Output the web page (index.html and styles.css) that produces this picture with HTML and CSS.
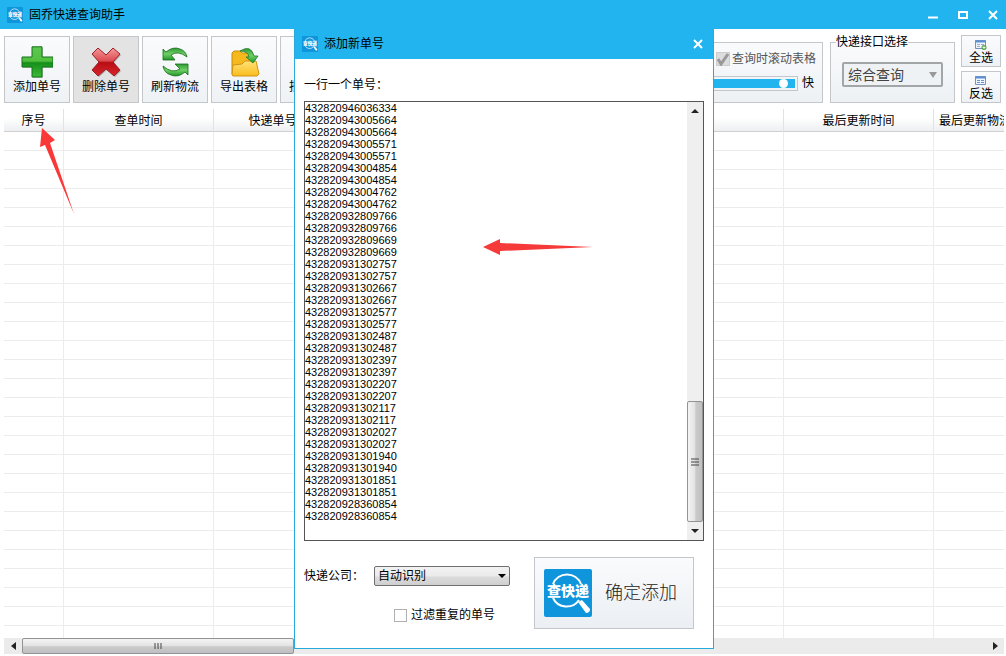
FILE: index.html
```html
<!DOCTYPE html>
<html lang="zh-CN">
<head>
<meta charset="utf-8">
<title>固乔快递查询助手</title>
<link rel="stylesheet" href="styles.css">
</head>
<body>
<svg class="defs" aria-hidden="true">
  <defs>
    <linearGradient id="green" x1="0" y1="0" x2="0" y2="1"><stop offset="0" stop-color="#5cc850"/><stop offset=".47" stop-color="#52c03e"/><stop offset=".53" stop-color="#158f1b"/><stop offset="1" stop-color="#3cba34"/></linearGradient>
    <linearGradient id="leaf" x1="0" y1="0" x2="0" y2="1"><stop offset="0" stop-color="#2f9a33"/><stop offset=".5" stop-color="#6fd067"/><stop offset="1" stop-color="#1f9427"/></linearGradient>
    <linearGradient id="red" x1="0" y1="0" x2="0" y2="1"><stop offset="0" stop-color="#f59a9d"/><stop offset=".46" stop-color="#dd4a50"/><stop offset=".52" stop-color="#b80d14"/><stop offset="1" stop-color="#d9262c"/></linearGradient>
    <linearGradient id="gold" x1="0" y1="0" x2="0" y2="1"><stop offset="0" stop-color="#ffe27a"/><stop offset="1" stop-color="#f9bd1c"/></linearGradient>
    <symbol id="logo" viewBox="0 0 48 48">
      <rect width="48" height="48" rx="2" fill="#0f95dc"/>
      <path d="M9 15A15 15 0 0 1 37 15M9 29A15 15 0 0 0 35 31" fill="none" stroke="#fff" stroke-width="2"/>
      <path d="M34 33L38 31L46 40Q46 44 42 44Z" fill="#fff"/>
      <text x="24" y="27" text-anchor="middle" font-size="14" font-weight="900" fill="#fff">查快递</text>
    </symbol>
  </defs>
</svg>
<main class="app">
  <header class="titlebar">
    <svg class="mini-logo"><use href="#logo"/></svg>
    <h1 class="title">固乔快递查询助手</h1>
    <div class="window-controls">
      <button class="control" aria-label="最小化"><svg width="12" height="12"><path d="M1 8.500H11" stroke="#fff" stroke-width="2"/></svg></button>
      <button class="control" aria-label="最大化"><svg width="12" height="12"><path d="M2 3H10V9H2Z" fill="none" stroke="#fff" stroke-width="2"/></svg></button>
      <button class="control" aria-label="关闭"><svg width="12" height="12"><path d="M2 2L10 10M10 2L2 10" stroke="#fff" stroke-width="2"/></svg></button>
    </div>
  </header>

  <section class="toolbar">
    <button class="tool"><svg class="tool-icon" viewBox="0 0 32 32"><path d="M12 2H22V12H33V22H22V32H12V22H2V12H12Z" fill="#888" opacity=".45"/><path d="M11 .8H21V11H32V21H21V31H11V21H1V11H11Z" fill="url(#green)" stroke="#14701a"/></svg>添加单号</button>
    <button class="tool tool-hover"><svg class="tool-icon" viewBox="0 0 32 32"><path d="M9 3L17 10L24 3L31 9L24 17L31 25L25 31L17 24L9 31L3 25L10 17L3 9Z" fill="#777" opacity=".5"/><path d="M8 2L16 9L23 2L30 8L23 16L30 24L24 30L16 23L8 30L2 24L9 16L2 8Z" fill="url(#red)" stroke="#9d2026"/></svg>删除单号</button>
    <button class="tool"><svg class="tool-icon" viewBox="0 0 32 32"><g fill="url(#leaf)" stroke="#176f1b" stroke-width=".8"><path d="M4 3L7 6Q14 0 21 3Q27 5 28 11Q19 4 12 9L16 14H4Z"/><path d="M29 29L26 26Q19 32 12 29Q5 27 4 20Q13 28 21 23L16 18H29Z"/></g></svg>刷新物流</button>
    <button class="tool"><svg class="tool-icon" viewBox="0 0 32 32"><path d="M4 7L6 5H12L14 7H24V28H4Z" fill="#f5b91e" stroke="#c88a09"/><path d="M4 29L5 19L14 18L17 15H28L31 28L29 30H5Z" fill="url(#gold)" stroke="#d19410"/><path d="M12 5Q23-2 26 10H30L25 17L18 11H21Q20 5 12 5Z" fill="url(#leaf)" stroke="#20782a" stroke-width=".8"/></svg>导出表格</button>
    <button class="tool">批量查询</button>
    <div class="toolbar-right">
      <div class="group scroll-group">
        <label class="scroll-option"><input class="scroll-check" type="checkbox" checked><svg class="tick" viewBox="0 0 14 14"><path d="M2 7L5 12L12 2" fill="none" stroke="#999" stroke-width="3"/></svg>查询时滚动表格</label>
        <label class="speed"><input class="speed-range" type="range" value="94" aria-label="滚动速度">快</label>
      </div>
      <fieldset class="api-group">
        <legend class="api-legend">快递接口选择</legend>
        <div class="select-wrap">
          <select class="api-select" aria-label="快递接口选择"><option>综合查询</option></select>
          <svg class="select-arrow" width="8" height="6"><path d="M0 0H8L4 6Z" fill="#999"/></svg>
        </div>
      </fieldset>
      <div class="pick">
        <button class="pick-button"><svg class="pick-icon" viewBox="0 0 12 10"><path d="M.5.5H10.500V8.500H.5Z" fill="#eef5fc" stroke="#7393bd"/><path d="M0 1.500H11" stroke="#5c90d6" stroke-width="2"/><path d="M2 4.500H5M6 4.500H9M2 6.500H5" stroke="#93b0d3"/><circle cx="9" cy="7.500" r="2.500" fill="#58a34a"/><path d="M7.500 7.500H10.500M9 6V9" stroke="#fff" stroke-width=".8"/></svg>全选</button>
        <button class="pick-button"><svg class="pick-icon" viewBox="0 0 12 10"><path d="M.5.5H10.500V8.500H.5Z" fill="#eef5fc" stroke="#7393bd"/><path d="M0 1.500H11" stroke="#5c90d6" stroke-width="2"/><path d="M2 4.500H5M6 4.500H9M2 6.500H5M6 6.500H9" stroke="#6b93c8"/></svg>反选</button>
      </div>
    </div>
  </section>

  <section class="grid-area">
    <table class="grid">
      <colgroup><col class="col-index"><col class="col"><col class="col"><col class="col-info"><col class="col"><col class="col-last"></colgroup>
      <thead><tr><th>序号</th><th>查单时间</th><th class="number-head">快递单号</th><th></th><th>最后更新时间</th><th class="clipped-head">最后更新物流</th></tr></thead>
      <tbody><tr><td></td><td></td><td></td><td></td><td></td><td></td></tr></tbody>
    </table>
  </section>
  <div class="hscroll">
    <span class="hscroll-end"><svg width="5" height="8"><path d="M5 0V8L0 4Z" fill="#222"/></svg></span>
    <span class="hscroll-thumb"><svg width="8" height="6"><path d="M1 0V6M4 0V6M7 0V6" stroke="#444"/></svg></span>
    <span class="hscroll-end hscroll-right"><svg width="5" height="8"><path d="M0 0V8L5 4Z" fill="#222"/></svg></span>
  </div>

  <section class="dialog" role="dialog" aria-label="添加新单号">
    <header class="titlebar dialog-titlebar">
      <svg class="mini-logo"><use href="#logo"/></svg>
      <h2 class="title">添加新单号</h2>
      <div class="window-controls">
        <button class="control" aria-label="关闭"><svg width="12" height="12"><path d="M2 2L10 10M10 2L2 10" stroke="#fff" stroke-width="2"/></svg></button>
      </div>
    </header>
    <div class="dialog-body">
      <label class="numbers-label" for="numbers">一行一个单号：</label>
      <div class="numbers-box">
        <textarea class="numbers" id="numbers" spellcheck="false">432820946036334
432820943005664
432820943005664
432820943005571
432820943005571
432820943004854
432820943004854
432820943004762
432820943004762
432820932809766
432820932809766
432820932809669
432820932809669
432820931302757
432820931302757
432820931302667
432820931302667
432820931302577
432820931302577
432820931302487
432820931302487
432820931302397
432820931302397
432820931302207
432820931302207
432820931302117
432820931302117
432820931302027
432820931302027
432820931301940
432820931301940
432820931301851
432820931301851
432820928360854
432820928360854</textarea>
        <div class="vscroll">
          <span class="vscroll-end"><svg width="8" height="4"><path d="M0 4H8L4 0Z" fill="#222"/></svg></span>
          <span class="vscroll-thumb"><svg width="8" height="8"><path d="M0 1H8M0 4H8M0 7H8" stroke="#444"/></svg></span>
          <span class="vscroll-end"><svg width="8" height="4"><path d="M0 0H8L4 4Z" fill="#222"/></svg></span>
        </div>
      </div>
      <div class="dialog-footer">
        <div class="options">
          <div class="company">
            <label for="company">快递公司：</label>
            <div class="select-wrap">
              <select class="company-select" id="company"><option>自动识别</option></select>
              <svg class="select-arrow company-arrow" width="8" height="4"><path d="M0 0H8L4 4Z" fill="#000"/></svg>
            </div>
          </div>
          <label class="filter"><input class="filter-check" type="checkbox">过滤重复的单号</label>
        </div>
        <button class="confirm"><svg class="confirm-logo"><use href="#logo"/></svg>确定添加</button>
      </div>
    </div>
  </section>

  <svg class="pointer pointer-index" width="36" height="88"><path d="M3 0L16 12L11 15L35 86L6 17L1 19Z" fill="#fb3838"/></svg>
  <svg class="pointer pointer-numbers" width="110" height="18"><path d="M0 9L17 1V5L110 9L17 13V17Z" fill="#f63a3a"/></svg>
</main>
</body>
</html>
```
FILE: styles.css
```css
* { box-sizing: border-box; }
body, button, input, select {
  font-family: "Liberation Sans", "Noto Sans CJK SC", sans-serif;
  font-size: 12px;
  line-height: 16px;
  color: #000;
}
body { margin: 0; background: #fff; }
button { padding: 0; }
.defs { position: absolute; width: 0; height: 0; }

.app {
  position: relative;
  display: flex;
  flex-direction: column;
  height: 100vh;
  padding-bottom: 2px;
  overflow: hidden;
}

.titlebar {
  display: flex;
  align-items: center;
  height: 29px;
  flex: none;
  padding: 0 7px;
  background: #22b4ef;
}
.mini-logo { width: 16px; height: 16px; margin-right: 6px; }
.title { margin: 0; font-size: 12px; font-weight: 400; }
.window-controls { display: flex; gap: 18px; margin-left: auto; }
.control { display: flex; border: 0; background: none; }

.toolbar {
  display: flex;
  gap: 3px;
  flex: none;
  padding: 6px 5px 6px 4px;
}
.tool {
  display: flex;
  flex-direction: column;
  align-items: center;
  gap: 1px;
  flex: none;
  width: 66px;
  height: 67px;
  margin-top: 1px;
  padding-top: 9px;
  border: 1px solid #c3c7cc;
  background: linear-gradient(#fafbfd, #eff2f5);
}
.tool:nth-child(5) { justify-content: flex-end; padding-bottom: 7px; }
.tool-hover { background: #e3e3e3; }
.tool-icon { width: 32px; height: 32px; }

.toolbar-right { display: flex; margin-left: auto; height: 68px; }
.group {
  width: 160px;
  margin: 7px 7px 0 0;
  padding: 8px 6px;
  border: 1px solid #c3c7cc;
  background: linear-gradient(#fafbfd, #edf1f4);
}
.scroll-option {
  position: relative;
  display: flex;
  align-items: center;
  justify-content: flex-end;
  gap: 2px;
  color: #555;
}
.scroll-check {
  appearance: none;
  width: 14px;
  height: 14px;
  margin: 0;
  border: 1px solid #ccc;
  background: #ddd;
}
.tick { position: absolute; right: 86px; width: 14px; height: 14px; }
.speed { display: flex; align-items: center; justify-content: space-between; margin-top: 8px; padding-right: 2px; }
.speed-range {
  appearance: none;
  width: 128px;
  height: 15px;
  margin: 0;
  padding: 2px;
  border: 1px solid #c3c7cc;
  background: #22b4ef content-box;
}
.speed-range::-webkit-slider-thumb {
  appearance: none;
  width: 9px;
  height: 9px;
  border-radius: 50%;
  background: #fff;
}
.api-group {
  width: 125px;
  height: 68px;
  min-width: 0;
  margin: 0 6px 0 0;
  padding: 0 11px;
  border: 1px solid #c3c7cc;
  background: linear-gradient(#fafbfd, #edf1f4);
}
.api-legend { height: 14px; margin-left: -6px; padding: 0; line-height: 14px; }
.select-wrap { position: relative; }
.api-select {
  appearance: none;
  display: block;
  width: 100%;
  height: 25px;
  margin-top: 13px;
  padding: 0 4px;
  border: 2px solid #a3a6a9;
  border-radius: 2px;
  background: #eff2f5;
  font-size: 14px;
  line-height: 18px;
  color: #444;
}
.select-arrow { position: absolute; right: 6px; bottom: 9px; pointer-events: none; }
.pick { display: flex; flex-direction: column; gap: 4px; }
.pick-button {
  display: flex;
  flex-direction: column;
  align-items: center;
  width: 40px;
  height: 32px;
  padding-top: 4px;
  border: 1px solid #c3c7cc;
  background: linear-gradient(#fafbfd, #eff2f5);
}
.pick-icon { width: 12px; height: 10px; flex: none; }

.grid-area { flex: 1; min-height: 0; margin: 0 2px 0 4px; overflow: hidden; }
.grid { width: 1080px; height: 100%; table-layout: fixed; border-collapse: separate; border-spacing: 0; }
.col-index { width: 60px; }
.col { width: 150px; }
.col-info { width: 420px; }
.col-last { width: 150px; }
.grid th {
  height: 23px;
  padding: 2px 0 0;
  border-right: 1px solid #dfe3e8;
  border-bottom: 1px solid #d0d0d0;
  background: linear-gradient(#fff 40%, #eeeff1);
  font-weight: 400;
}
.grid .number-head { padding-right: 32px; }
.grid .clipped-head { padding-left: 5px; text-align: left; }
.grid td {
  padding: 0;
  border-right: 1px solid #ececec;
  background: repeating-linear-gradient(#fff 0 18px, #ececec 18px 19px);
}

.hscroll { display: flex; flex: none; height: 16px; margin: 0 2px 0 4px; background: #ebebeb; }
.hscroll-end { display: flex; align-items: center; justify-content: center; width: 18px; }
.hscroll-right { margin-left: auto; }
.hscroll-thumb {
  display: flex;
  align-items: center;
  justify-content: center;
  width: 272px;
  border: 1px solid #939393;
  border-radius: 2px;
  background: linear-gradient(#f4f4f4, #e2e2e2 50%, #cacaca 55%, #c0c0c4);
}

.dialog {
  position: absolute;
  left: 294px;
  top: 29px;
  width: 420px;
  border: 1px solid #2aa9dc;
  border-top: 0;
  background: #fff;
}
.dialog-titlebar { height: 30px; }
.dialog-titlebar .control { margin-right: 2px; }
.dialog-body { padding: 18px 9px 19px; }
.numbers-label { display: block; margin-bottom: 8px; }
.numbers-box { display: flex; height: 440px; border: 1px solid #555; }
.numbers {
  flex: 1;
  min-width: 0;
  margin: 0;
  padding: 0;
  border: 0;
  outline: 0;
  resize: none;
  overflow: hidden;
  font: 11px/12px "Liberation Sans", sans-serif;
  color: #000;
}
.vscroll { display: flex; flex-direction: column; width: 16px; background: #efefef; }
.vscroll-end { display: flex; align-items: center; justify-content: center; height: 18px; }
.vscroll-thumb {
  display: flex;
  align-items: center;
  justify-content: center;
  height: 121px;
  margin-top: auto;
  border: 1px solid #939393;
  border-radius: 2px;
  background: linear-gradient(90deg, #f4f4f4, #e2e2e2 50%, #cacaca 55%, #c0c0c4);
}

.dialog-footer { display: flex; justify-content: space-between; margin: 16px 10px 0 0; }
.options { display: flex; flex-direction: column; gap: 21px; padding-top: 9px; }
.company { display: flex; align-items: center; gap: 10px; }
.company-select {
  appearance: none;
  display: block;
  width: 136px;
  height: 20px;
  padding: 0 3px;
  border: 1px solid #707070;
  border-radius: 2px;
  background: linear-gradient(#f2f2f2, #ebebeb 50%, #dcdcdc 55%, #cfcfcf);
}
.company-arrow { right: 4px; bottom: 8px; }
.filter { display: flex; align-items: center; gap: 4px; padding-left: 90px; }
.filter-check { appearance: none; width: 13px; height: 13px; margin: 0; border: 1px solid #b0b0b0; background: #fff; }
.confirm {
  display: flex;
  align-items: center;
  gap: 13px;
  width: 160px;
  height: 72px;
  padding-left: 9px;
  border: 1px solid #c3c7cc;
  background: linear-gradient(#fafbfd, #ebeff3);
  font-size: 18px;
  line-height: 24px;
  font-weight: 300;
  color: #222;
}
.confirm-logo { width: 48px; height: 48px; }

.pointer { position: absolute; pointer-events: none; }
.pointer-index { left: 39px; top: 128px; }
.pointer-numbers { left: 483px; top: 238px; }
```
